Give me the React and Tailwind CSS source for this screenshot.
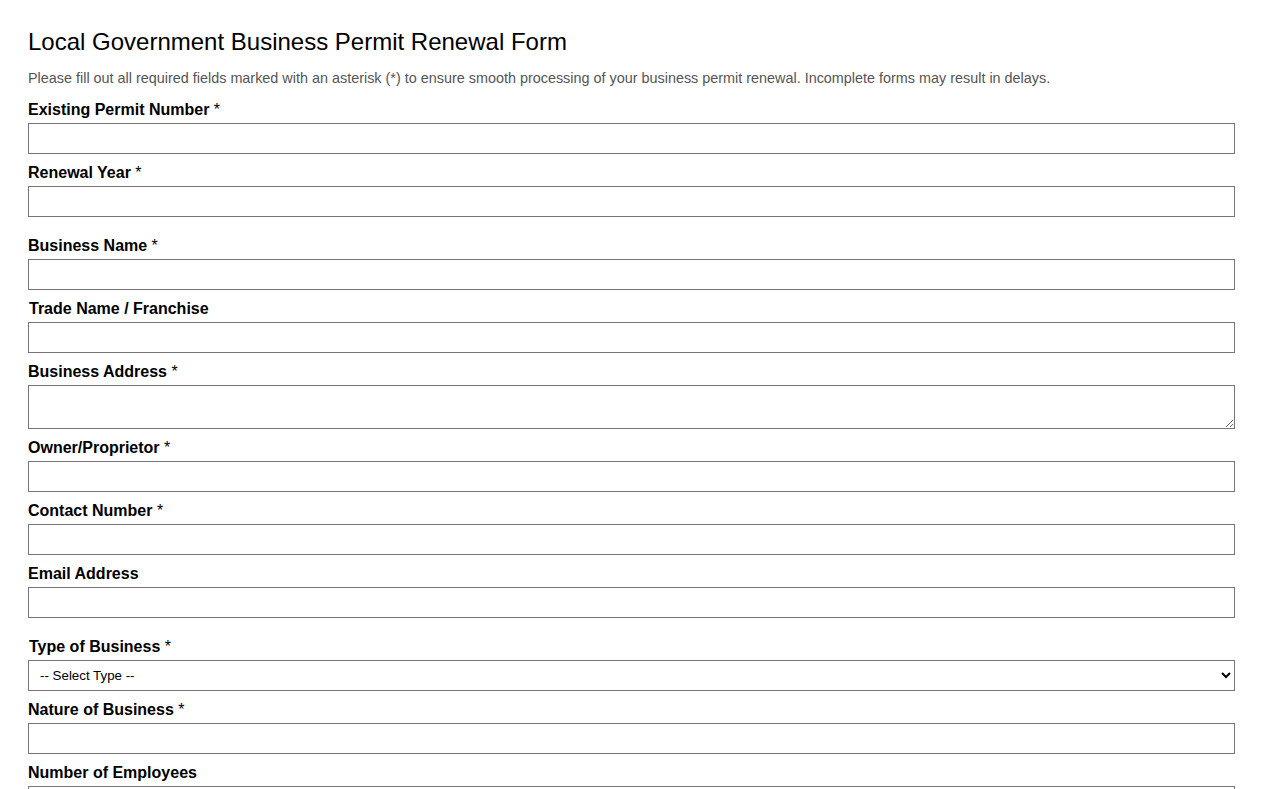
import { useState } from 'react'

const fieldClass =
  'block w-full h-[31px] border border-[#767676] bg-white px-2 text-[13.33px] text-black outline-none'

const Field = ({ label, required, type = 'text', shift, textarea, children, value, onChange }) => (
  <div className="pb-[10px]">
    <label className={`block text-[16px] leading-[18px] font-bold text-black mb-[4px] ${shift ? 'ml-px' : ''}`}>
      {label}
      {required && <span className="font-normal"> *</span>}
    </label>
    {textarea ? (
      <textarea className="block w-full h-[44px] border border-[#767676] bg-white px-2 py-1 text-[13.33px] outline-none" value={value} onChange={onChange} />
    ) : children ? (
      children
    ) : (
      <input type={type} className={fieldClass} value={value} onChange={onChange} />
    )}
  </div>
)

const App = () => {
  const [form, setForm] = useState({})
  const bind = (key) => ({
    value: form[key] || '',
    onChange: (e) => setForm({ ...form, [key]: e.target.value }),
  })

  return (
    <div className="min-h-screen bg-white px-[28px] pt-[28px] font-['Liberation_Sans',Arial,sans-serif] text-black">
      <h1 className="text-[24px] leading-[28px] font-normal mb-[14px]">
        Local Government Business Permit Renewal Form
      </h1>
      <p className="text-[14.4px] leading-[16px] text-[#555555] mb-[15px]">
        Please fill out all required fields marked with an asterisk (*) to ensure smooth processing of your business permit renewal. Incomplete forms may result in delays.
      </p>

      <form className="w-[1207px]" onSubmit={(e) => e.preventDefault()}>
        <div className="pb-[10px]">
          <Field label="Existing Permit Number" required {...bind('permit')} />
          <Field label="Renewal Year" required type="number" {...bind('year')} />
        </div>

        <div className="pb-[10px]">
          <Field label="Business Name" required {...bind('name')} />
          <Field label="Trade Name / Franchise" shift {...bind('trade')} />
          <Field label="Business Address" required textarea {...bind('address')} />
          <Field label="Owner/Proprietor" required {...bind('owner')} />
          <Field label="Contact Number" required type="tel" {...bind('contact')} />
          <Field label="Email Address" type="email" {...bind('email')} />
        </div>

        <div>
          <Field label="Type of Business" required shift>
            <select className="block w-full h-[31px] border border-[#767676] bg-white pl-[7px] pr-1 text-[13.33px] text-black outline-none" {...bind('type')}>
              <option value="">-- Select Type --</option>
              <option value="sole">Sole Proprietorship</option>
              <option value="partnership">Partnership</option>
              <option value="corporation">Corporation</option>
              <option value="cooperative">Cooperative</option>
            </select>
          </Field>
          <Field label="Nature of Business" required {...bind('nature')} />
          <Field label="Number of Employees" type="number" {...bind('employees')} />
        </div>
      </form>
    </div>
  )
}

export default App
